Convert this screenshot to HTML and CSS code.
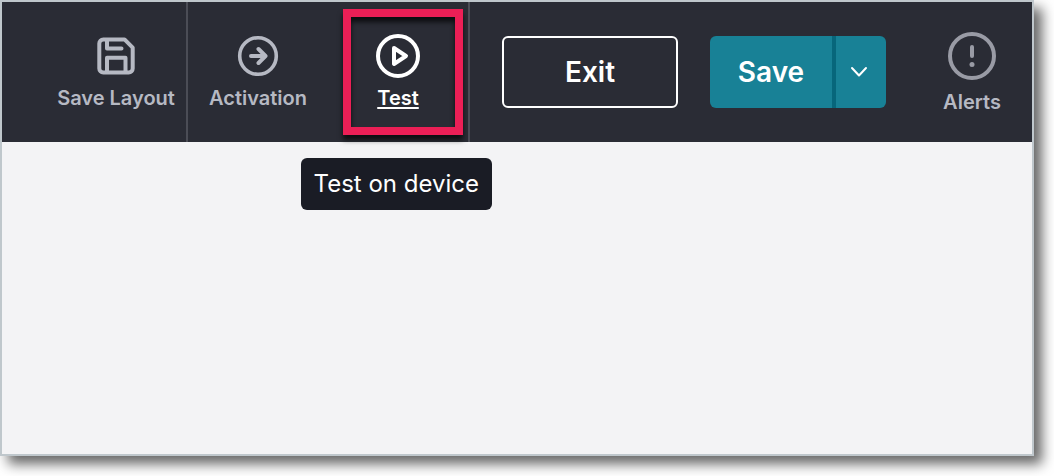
FILE: index.html
```
<!DOCTYPE html>
<html lang="en">
<head>
  <meta charset="UTF-8">
  <meta name="viewport" content="width=device-width, initial-scale=1.0">
  <title>Layout editor</title>
  <link rel="stylesheet" href="styles.css">
</head>
<body>
  <div class="window">
    <!-- Toolbar -->
    <header class="toolbar">
      <div class="tool-group">
        <button class="tool" type="button">
          <svg class="tool-icon" viewBox="0 0 44 44" fill="none" stroke="currentColor" stroke-width="4" stroke-linejoin="round" stroke-linecap="round">
            <path d="M9.300 5.400H30.500L38.700 13.600V34.500a4 4 0 0 1-4 4H9.300a4 4 0 0 1-4-4V9.400a4 4 0 0 1 4-4z"/>
            <path d="M13 6V14.600H27.500M13 38V23.800H31.500V38"/>
          </svg>
          <span class="tool-label">Save Layout</span>
        </button>
      </div>

      <div class="tool-group">
        <button class="tool" type="button">
          <svg class="tool-icon" viewBox="0 0 44 44" fill="none" stroke="currentColor" stroke-width="4" stroke-linejoin="round" stroke-linecap="round">
            <circle cx="22" cy="22" r="18.300" stroke-width="3.600"/>
            <path d="M15 22H29M22.500 15L29.500 22L22.500 29"/>
          </svg>
          <span class="tool-label">Activation</span>
        </button>
        <button class="tool tool-active" type="button" aria-describedby="test-tip">
          <svg class="tool-icon" viewBox="0 0 44 44" fill="none" stroke="currentColor" stroke-width="4" stroke-linejoin="round">
            <circle cx="22" cy="22" r="20"/>
            <path d="M18 14L30 22L18 30z"/>
          </svg>
          <span class="tool-label">Test</span>
          <span class="highlight"></span>
          <span class="tooltip" id="test-tip" role="tooltip">Test on device</span>
        </button>
      </div>

      <div class="actions">
        <button class="btn btn-outline" type="button">Exit</button>
        <div class="split">
          <button class="btn btn-save" type="button">Save</button>
          <button class="btn btn-more" type="button" aria-label="More save options">
            <svg class="chevron" viewBox="0 0 18 12" fill="none" stroke="currentColor" stroke-width="2" stroke-linecap="round" stroke-linejoin="round">
              <path d="M2 2L9 9.500L16 2"/>
            </svg>
          </button>
        </div>
      </div>

      <button class="tool alerts" type="button">
        <svg class="alert-icon" viewBox="0 0 48 48" fill="none" stroke="currentColor" stroke-width="4" stroke-linecap="round">
          <circle cx="24" cy="24" r="22"/>
          <path d="M24 15V24"/>
          <circle cx="24" cy="32.500" r="2.500" fill="currentColor" stroke="none"/>
        </svg>
        <span class="tool-label">Alerts</span>
      </button>
    </header>

    <!-- Canvas -->
    <main class="workspace"></main>
  </div>
</body>
</html>
```
FILE: styles.css
```
* {
    box-sizing: border-box;
}

body {
    margin: 0;
    padding: 0 20px 20px 0;
    min-height: 100vh;
    display: flex;
    background: #fff;
    font-family: Inter, "Liberation Sans", sans-serif;
}

.window {
    flex: 1;
    display: flex;
    flex-direction: column;
    border: 2px solid #bfc7cc;
    background: #f3f3f5;
    box-shadow: 8px 8px 12px 0 rgba(0, 0, 0, 0.6);
}

button {
    font-family: inherit;
    cursor: pointer;
}

/* toolbar */
.toolbar {
    display: flex;
    justify-content: flex-end;
    background: #2a2c35;
}

.tool-group {
    display: flex;
    border-right: 2px solid #4b4d56;
}

.tool {
    position: relative;
    display: flex;
    flex-direction: column;
    align-items: center;
    width: 140px;
    height: 140px;
    padding: 32px 0 0;
    border: none;
    background: none;
    color: #b6b9c3;
}

.tool-icon {
    width: 44px;
    height: 44px;
    margin-bottom: 8px;
}

.tool-label {
    font-size: 20px;
    line-height: 24px;
    font-weight: 600;
    white-space: nowrap;
}

.tool-active {
    color: #fff;
}

.tool-active .tool-label {
    text-decoration: underline;
    text-decoration-thickness: 2px;
    text-underline-offset: 2px;
}

/* callout frame over the active tool */
.highlight {
    position: absolute;
    top: 7px;
    left: 15px;
    width: 120px;
    height: 126px;
    border: 8px solid #eb1f56;
    box-shadow: 0 5px 5px rgba(0, 0, 0, 0.7), inset 0 5px 5px rgba(0, 0, 0, 0.7);
}

.tooltip {
    position: absolute;
    top: 156px;
    right: -24px;
    padding: 10px 13px;
    border-radius: 6px;
    background: #1a1c25;
    color: #fff;
    font-size: 24px;
    line-height: 32px;
    white-space: nowrap;
}

/* buttons */
.actions {
    display: flex;
    align-items: center;
    gap: 32px;
    padding: 0 26px 0 32px;
}

.btn {
    height: 72px;
    padding: 0;
    border: none;
    color: #fff;
    font-size: 28px;
    font-weight: 600;
}

.btn-outline {
    width: 176px;
    border: 2px solid #fff;
    border-radius: 6px;
    background: none;
}

.split {
    display: flex;
    border-radius: 6px;
    overflow: hidden;
}

.btn-save {
    width: 122px;
    background: #188196;
}

.btn-more {
    display: flex;
    align-items: center;
    justify-content: center;
    width: 54px;
    padding-right: 4px;
    border-left: 4px solid #07667b;
    background: #188196;
}

.chevron {
    width: 18px;
    height: 12px;
}

/* alerts */
.alerts {
    width: 120px;
    padding-top: 30px;
}

.alert-icon {
    width: 48px;
    height: 48px;
    margin-bottom: 10px;
    color: #999ba5;
}

.workspace {
    flex: 1;
}
```
